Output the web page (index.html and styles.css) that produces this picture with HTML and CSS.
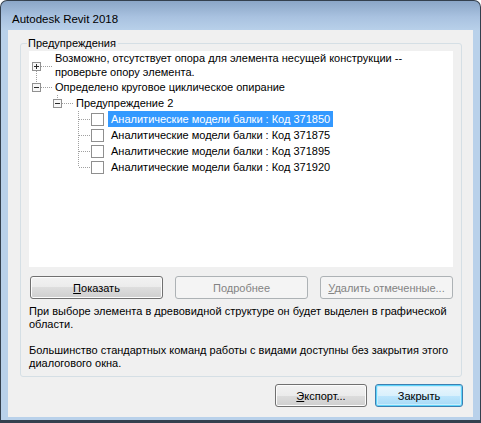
FILE: index.html
```html
<!DOCTYPE html>
<html>
<head>
<meta charset="utf-8">
<link rel="stylesheet" href="styles.css">
</head>
<body>
<div class="window">
  <div class="titlebar">Autodesk Revit 2018</div>
  <div class="client">
    <fieldset class="group">
      <legend>Предупреждения</legend>
      <div class="tree">
        <div class="row row-tall">
          <svg class="gutter" width="23" height="28" viewBox="0 0 23 28">
            <line x1="7.5" y1="20" x2="7.5" y2="28" class="dot"/>
            <line x1="12" y1="15.5" x2="23" y2="15.5" class="dot"/>
            <rect x="3.5" y="11.5" width="8" height="8" class="exp"/>
            <line x1="5" y1="15.5" x2="10" y2="15.5" class="sign"/>
            <line x1="7.5" y1="13" x2="7.5" y2="18" class="sign"/>
          </svg>
          <span class="label">Возможно, отсутствует опора для элемента несущей конструкции --<br>проверьте опору элемента.</span>
        </div>
        <div class="row">
          <svg class="gutter" width="23" height="16" viewBox="0 0 23 16">
            <line x1="7.5" y1="0" x2="7.5" y2="4" class="dot"/>
            <line x1="12" y1="8.5" x2="23" y2="8.5" class="dot"/>
            <rect x="3.5" y="4.5" width="8" height="8" class="exp"/>
            <line x1="5" y1="8.5" x2="10" y2="8.5" class="sign"/>
          </svg>
          <span class="label">Определено круговое циклическое опирание</span>
        </div>
        <div class="row lvl1">
          <svg class="gutter" width="23" height="16" viewBox="0 0 23 16">
            <line x1="7.5" y1="0" x2="7.5" y2="4" class="dot"/>
            <line x1="12" y1="8.5" x2="23" y2="8.5" class="dot"/>
            <rect x="3.5" y="4.5" width="8" height="8" class="exp"/>
            <line x1="5" y1="8.5" x2="10" y2="8.5" class="sign"/>
          </svg>
          <span class="label">Предупреждение 2</span>
        </div>
        <div class="row lvl2">
          <svg class="gutter-c" width="20" height="16" viewBox="0 0 20 16">
            <line x1="7.5" y1="0" x2="7.5" y2="16" class="dot"/>
            <line x1="8" y1="8.5" x2="19" y2="8.5" class="dot"/>
          </svg>
          <span class="check"></span>
          <span class="label selected">Аналитические модели балки : Код 371850</span>
        </div>
        <div class="row lvl2">
          <svg class="gutter-c" width="20" height="16" viewBox="0 0 20 16">
            <line x1="7.5" y1="0" x2="7.5" y2="16" class="dot"/>
            <line x1="8" y1="8.5" x2="19" y2="8.5" class="dot"/>
          </svg>
          <span class="check"></span>
          <span class="label">Аналитические модели балки : Код 371875</span>
        </div>
        <div class="row lvl2">
          <svg class="gutter-c" width="20" height="16" viewBox="0 0 20 16">
            <line x1="7.5" y1="0" x2="7.5" y2="16" class="dot"/>
            <line x1="8" y1="8.5" x2="19" y2="8.5" class="dot"/>
          </svg>
          <span class="check"></span>
          <span class="label">Аналитические модели балки : Код 371895</span>
        </div>
        <div class="row lvl2">
          <svg class="gutter-c" width="20" height="16" viewBox="0 0 20 16">
            <line x1="7.5" y1="0" x2="7.5" y2="8" class="dot"/>
            <line x1="8" y1="8.5" x2="19" y2="8.5" class="dot"/>
          </svg>
          <span class="check"></span>
          <span class="label">Аналитические модели балки : Код 371920</span>
        </div>
      </div>
      <div class="actions">
        <button class="btn"><u>П</u>оказать</button>
        <button class="btn" disabled>Подробнее</button>
        <button class="btn" disabled><u>У</u>далить отмеченные...</button>
      </div>
      <p class="note">При выборе элемента в древовидной структуре он будет выделен в графической<br>области.</p>
      <p class="note">Большинство стандартных команд работы с видами доступны без закрытия этого<br>диалогового окна.</p>
    </fieldset>
    <div class="footer">
      <button class="btn btn-export"><u>Э</u>кспорт...</button>
      <button class="btn btn-default">Закрыть</button>
    </div>
  </div>
</div>
</body>
</html>
```

FILE: styles.css
```css
html, body {
  margin: 0;
  padding: 0;
  background: #ffffff;
}

body {
  font-family: "Liberation Sans", Arial, sans-serif;
  font-size: 11px;
  color: #000;
}

.window {
  box-sizing: border-box;
  width: 481px;
  height: 423px;
  border: 1px solid #34404e;
  border-bottom-width: 3px;
  border-radius: 7px 7px 0 0;
  background: linear-gradient(to bottom, #8ba6c7 0px, #a9c2e0 16px, #b9d1ea 30px, #b9d1ea 100%);
  padding: 0 7px 3px 7px;
  display: flex;
  flex-direction: column;
}

.titlebar {
  height: 29px;
  box-sizing: border-box;
  padding: 10px 0 0 4px;
  line-height: 16px;
  font-size: 11.5px;
  color: #000;
}

.client {
  flex: 1;
  background: #f0f0f0;
  display: flex;
  flex-direction: column;
}

.group {
  margin: 6px 11px 0 12px;
  padding: 0 8px 0 8px;
  border: 1px solid #d5dfe5;
  border-radius: 3px;
  height: 341px;
  box-sizing: border-box;
  min-width: 0;
}

.group legend {
  margin-left: -2px;
  padding: 0 2px 0 1px;
  line-height: 15px;
}

.tree {
  background: #fff;
  height: 216px;
  box-sizing: border-box;
  padding-top: 0;
  line-height: 16px;
}

.row {
  display: flex;
  align-items: flex-start;
  height: 16px;
}

.row-tall {
  height: 28px;
  line-height: 14px;
}

.lvl1 { padding-left: 21px; }
.lvl2 { padding-left: 42px; }

.gutter, .gutter-c {
  flex: none;
  display: block;
}

.dot {
  stroke: #a0a0a0;
  stroke-width: 1;
  stroke-dasharray: 1 1;
}

.exp {
  fill: #f7f7f7;
  stroke: #919191;
}

.sign {
  stroke: #2b2b2b;
  stroke-width: 1;
}

.check {
  flex: none;
  width: 13px;
  height: 13px;
  box-sizing: border-box;
  border: 1px solid #8f8f8f;
  background: #fff;
  margin-top: 2px;
  margin-right: 4px;
}

.label {
  padding: 0 3px;
  white-space: nowrap;
}

.selected {
  background: #3399ff;
  color: #fff;
}

.actions {
  display: flex;
  gap: 12px;
  margin: 9px 0 0 1px;
}

.btn {
  box-sizing: border-box;
  height: 23px;
  width: 133px;
  font-family: inherit;
  font-size: 11px;
  color: #000;
  padding: 0;
  white-space: nowrap;
  border: 1px solid #707070;
  border-radius: 3px;
  background: linear-gradient(to bottom, #f2f2f2 0%, #ebebeb 50%, #dddddd 50%, #cfcfcf 100%);
  box-shadow: inset 0 0 0 1px #fcfcfc;
}

.btn:disabled {
  color: #838383;
  border-color: #adb2b5;
  background: #f4f4f4;
  box-shadow: none;
}

.note {
  margin: 6px 0 0 0;
  line-height: 13px;
  white-space: nowrap;
}

.note + .note {
  margin-top: 13px;
}

.footer {
  display: flex;
  justify-content: flex-end;
  gap: 8px;
  margin: 7px 10px 0 0;
}

.btn-export {
  width: 92px;
}

.btn-default {
  width: 88px;
  border-color: #3c7fb1;
  background: linear-gradient(to bottom, #eaf6fd 0%, #d9f0fc 50%, #bee6fd 50%, #a7d9f5 100%);
  box-shadow: inset 0 0 0 1px #5fd4fb, inset 0 0 0 2px #c9edfc;
}
```
